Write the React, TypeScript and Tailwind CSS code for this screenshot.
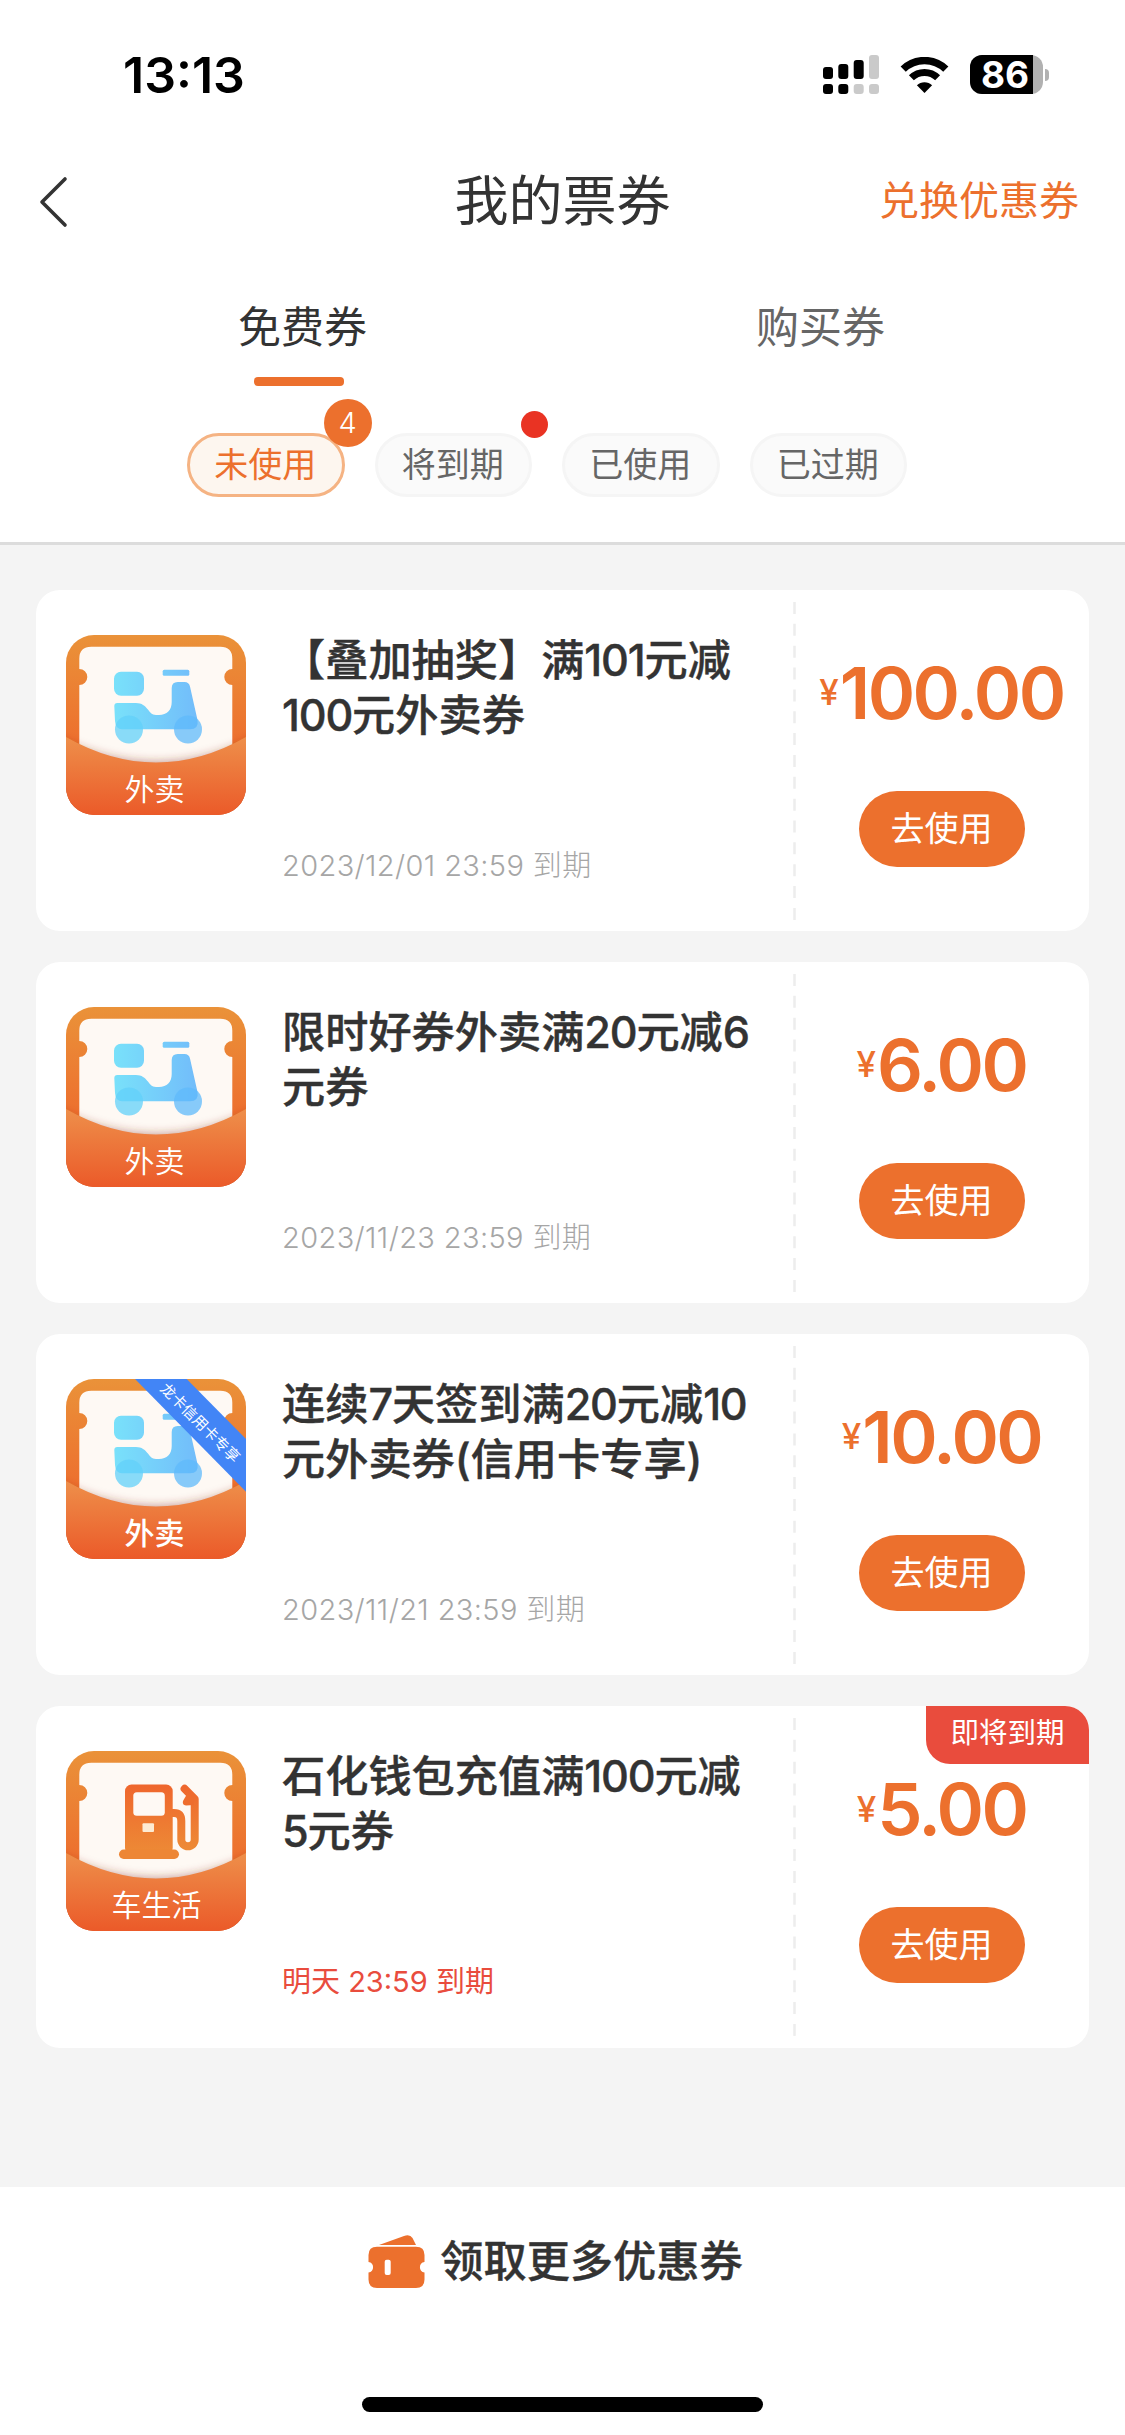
import { clsx } from 'clsx';

type IconKind = 'takeout' | 'fuel';

interface Coupon {
  id: number;
  lines: string[];
  expires: string;
  amount: string;
  icon: IconKind;
  ribbon?: string;
  tag?: string;
}

const COUPONS: Coupon[] = [
  { id: 1, lines: ['【叠加抽奖】满101元减', '100元外卖券'], expires: '2023/12/01 23:59 到期', amount: '100.00', icon: 'takeout' },
  { id: 2, lines: ['限时好券外卖满20元减6', '元券'], expires: '2023/11/23 23:59 到期', amount: '6.00', icon: 'takeout' },
  { id: 3, lines: ['连续7天签到满20元减10', '元外卖券(信用卡专享)'], expires: '2023/11/21 23:59 到期', amount: '10.00', icon: 'takeout', ribbon: '龙卡信用卡专享' },
  { id: 4, lines: ['石化钱包充值满100元减', '5元券'], expires: '明天 23:59 到期', amount: '5.00', icon: 'fuel', tag: '即将到期' },
];

const FILTERS = [
  { label: '未使用', active: true, count: 4 },
  { label: '将到期', dot: true },
  { label: '已使用' },
  { label: '已过期' },
];

function StatusBar() {
  return (
    <div className="flex h-[150px] items-start justify-between pt-[55px] pr-[76px] pl-[123px]">
      <span className="text-[50px] leading-[41px] font-semibold text-black">13:13</span>
      <div className="flex h-[39px] items-center">
        <svg width="56" height="39" viewBox="0 0 56 39">
          <rect x="0" y="12" width="10" height="12" rx="3" />
          <rect x="15.3" y="9" width="10" height="15" rx="3" />
          <rect x="30.7" y="5" width="10" height="19" rx="3" />
          <rect x="46" y="0" width="10" height="24" rx="3" fill="#cacaca" />
          <rect x="0" y="29" width="10" height="10" rx="3" />
          <rect x="15.3" y="29" width="10" height="10" rx="3" />
          <rect x="30.7" y="29" width="10" height="10" rx="3" fill="#cacaca" />
          <rect x="46" y="29" width="10" height="10" rx="3" fill="#cacaca" />
        </svg>
        <svg className="ml-[21px]" width="49" height="36" viewBox="0 0 49 36">
          <path d="M3.2 12.2 A30.5 30.5 0 0 1 45.8 12.2" fill="none" stroke="#000" strokeWidth="7.4" />
          <path d="M11.4 20.8 A18.6 18.6 0 0 1 37.6 20.8" fill="none" stroke="#000" strokeWidth="7" />
          <path d="M24.5 36 L16.9 28.3 A10.8 10.8 0 0 1 32.1 28.3 Z" />
        </svg>
        <div className="ml-[21px] h-[39px] w-[73px] rounded-[12px] bg-[#b1b1b1]">
          <div className="h-[39px] w-[63px] rounded-l-[12px] bg-black pr-[4px] text-right text-[37px] leading-[39px] font-bold text-white">86</div>
        </div>
        <div className="ml-[2px] h-[12px] w-[4px] rounded-r-full bg-[#b1b1b1]" />
      </div>
    </div>
  );
}

function Scooter() {
  return (
    <g>
      <rect x="48" y="36.7" width="30" height="24" rx="7" fill="url(#sky)" />
      <rect x="96.7" y="34.7" width="26.6" height="6" rx="1.5" fill="url(#sky)" />
      <path
        d="M48.3 71 Q48.3 68 51.3 68 H70 C82 68 82 80 90 80 H93 C101 80 105.7 75 105.7 67 V53 Q105.7 47 111.7 47 H118.5 Q123 47 124 51.5 L131.5 85 Q133 94.3 124 94.3 H56 Q49.5 94.3 49 86 Z"
        fill="url(#sky)"
      />
      <circle cx="63" cy="94.5" r="14" fill="#62d0f9" fillOpacity="0.75" />
      <circle cx="122" cy="94.5" r="14" fill="#5fbafb" fillOpacity="0.75" />
    </g>
  );
}

function FuelPump() {
  return (
    <g>
      <rect x="59" y="33.5" width="47.7" height="70" rx="6.5" fill="url(#pump)" />
      <rect x="67.3" y="41.3" width="31.5" height="23.5" rx="3.5" fill="#fef9f4" />
      <rect x="76.5" y="72.3" width="11.5" height="8.7" rx="1" fill="#fdebd3" />
      <rect x="53" y="98.5" width="60" height="9.5" rx="4.7" fill="#ed8635" />
      <path
        d="M105 62 H108 Q115.3 62 115.3 70 V88.6 A6.7 6.7 0 0 0 128.7 88.6 V48 L118.6 37.8"
        fill="none"
        stroke="url(#hose)"
        strokeWidth="8"
        strokeLinecap="round"
        strokeLinejoin="round"
      />
      <path d="M121 43 L117 50 Q116 54 120 54.5 L128 54 V46 Z" fill="#ee6d2e" />
    </g>
  );
}

function CouponIcon({ kind, ribbon }: { kind: IconKind; ribbon?: string }) {
  return (
    <svg className="shrink-0" width="180" height="180" viewBox="0 0 180 180">
      <defs>
        <linearGradient id="frame" x1="0" y1="0" x2="0" y2="1">
          <stop offset="0" stopColor="#ea9239" />
          <stop offset="0.6" stopColor="#ed6f2e" />
        </linearGradient>
        <linearGradient id="pocket" x1="0" y1="0" x2="0" y2="1">
          <stop offset="0" stopColor="#ee8f4a" />
          <stop offset="1" stopColor="#eb5a29" />
        </linearGradient>
        <linearGradient id="sky" gradientUnits="userSpaceOnUse" x1="48" y1="0" x2="132" y2="0">
          <stop offset="0" stopColor="#79e1fa" />
          <stop offset="1" stopColor="#72bcfa" />
        </linearGradient>
        <linearGradient id="pump" x1="0" y1="0" x2="0" y2="1">
          <stop offset="0" stopColor="#ef662d" />
          <stop offset="1" stopColor="#ed8b36" />
        </linearGradient>
        <linearGradient id="hose" gradientUnits="userSpaceOnUse" x1="0" y1="34" x2="0" y2="100">
          <stop offset="0" stopColor="#ef662d" />
          <stop offset="1" stopColor="#ed8b36" />
        </linearGradient>
        <filter id="soft" x="-20%" y="-20%" width="140%" height="140%">
          <feGaussianBlur stdDeviation="5" />
        </filter>
        <clipPath id="tile">
          <rect width="180" height="180" rx="28" />
        </clipPath>
      </defs>
      <g clipPath="url(#tile)">
        <rect width="180" height="180" fill="url(#frame)" />
        <path
          d="M25.3 11.7 H154.3 Q166.3 11.7 166.3 23.7 V34 A8 8 0 0 0 166.3 50 V140 H13.3 V50 A8 8 0 0 0 13.3 34 V23.7 Q13.3 11.7 25.3 11.7 Z"
          fill="#fef9f4"
        />
        {kind === 'takeout' ? <Scooter /> : <FuelPump />}
        <path d="M-10 102 Q90 152 190 102 V180 H-10 Z" fill="#8a3020" fillOpacity="0.5" filter="url(#soft)" />
        <path d="M0 102 Q90 153 180 102 V180 H0 Z" fill="url(#pocket)" />
        {ribbon && <path d="M69 0 H120.7 L180 60 V112.7 Z" fill="#4285f6" />}
      </g>
      {ribbon && (
        <text x="0" y="0" transform="translate(134 44) rotate(45)" textAnchor="middle" dy="5" fontSize="15" fill="#fff">
          {ribbon}
        </text>
      )}
      <text x={kind === 'fuel' ? 90.5 : 88.5} y="165" textAnchor="middle" fontSize="30" fontWeight={ribbon ? 500 : 350} fill="#fff">
        {kind === 'fuel' ? '车生活' : '外卖'}
      </text>
    </svg>
  );
}

// digits sit a little tighter than the Chinese glyphs around them
function TitleLine({ text }: { text: string }) {
  return (
    <span className="block">
      {text.split(/(\d+)/).map((part, i) => (
        <span key={i} className={clsx(/^\d/.test(part) && 'tracking-[-1.2px]')}>{part}</span>
      ))}
    </span>
  );
}

function CouponCard({ coupon }: { coupon: Coupon }) {
  return (
    <div className="relative flex h-[341.5px] rounded-[24px] bg-white">
      <div className="flex w-[757px] gap-[36px] pl-[30px]">
        <div className="pt-[45px]">
          <CouponIcon kind={coupon.icon} ribbon={coupon.ribbon} />
        </div>
        <div className="pt-[43px]">
          <h2 className="text-[43.2px] leading-[55px] font-medium whitespace-nowrap text-[#333] [-webkit-text-stroke:0.4px_#333]">
            {coupon.lines.map(line => (
              <TitleLine key={line} text={line} />
            ))}
          </h2>
          <p
            className={clsx(
              'mt-[101px] text-[29px] leading-[44px] whitespace-nowrap',
              coupon.tag ? 'text-[#e94c3d]' : 'font-light tracking-[0.38px] text-[#a6a6a6]',
            )}
          >
            {coupon.expires}
          </p>
        </div>
      </div>
      <svg className="mt-[12px] shrink-0" width="3" height="319" viewBox="0 0 3 319">
        <path d="M1.5 0 V319" stroke="#ededed" strokeWidth="2.5" strokeDasharray="12 9.85" />
      </svg>
      <div className="flex flex-1 flex-col items-center pr-[2px]">
        <div className="mt-[63px] flex h-[80px] items-center text-[#ec702d]">
          <span className="pr-[1px] text-[35px] leading-none font-medium">¥</span>
          <span className="text-[72px] leading-[80px] font-semibold tracking-[-2.6px]">{coupon.amount}</span>
        </div>
        <button className="mt-[58px] h-[76px] w-[166px] rounded-full bg-[#ec702d] text-[34px] leading-[76px] text-white">去使用</button>
      </div>
      {coupon.tag && (
        <span className="absolute top-0 right-0 h-[58px] w-[163px] rounded-tr-[24px] rounded-bl-[24px] bg-[#e94c3d] text-center text-[28.5px] leading-[54px] text-white">
          {coupon.tag}
        </span>
      )}
    </div>
  );
}

export default function App() {
  return (
    <div className="flex h-[2435px] w-[1125px] flex-col bg-[#f4f4f4] font-['Inter','Noto_Sans_CJK_SC',sans-serif]">
      <header className="h-[545px] border-b-[3px] border-[#dcdcdc] bg-white">
        <StatusBar />
        <div className="grid h-[104px] grid-cols-[1fr_auto_1fr] items-center pr-[46px] pl-[38px]">
          <svg width="30" height="52" viewBox="0 0 30 52">
            <path d="M27 3 L4 26 L27 49" fill="none" stroke="#333" strokeWidth="3.6" strokeLinecap="round" strokeLinejoin="round" />
          </svg>
          <h1 className="pl-[8px] text-[54px] leading-none text-[#333]">我的票券</h1>
          <span className="pb-[3px] text-right text-[40px] leading-none text-[#ec702d]">兑换优惠券</span>
        </div>
        <nav className="flex h-[134px] pl-[45px]">
          <div className="flex w-[515px] flex-col items-center pt-[42px]">
            <span className="text-[43px] leading-[62px] text-[#333]">免费券</span>
            <span className="mt-[19px] mr-[7px] h-[9px] w-[90px] rounded-[4px] bg-[#ec702d]" />
          </div>
          <div className="flex w-[521px] flex-col items-center pt-[42px]">
            <span className="text-[43px] leading-[62px] text-[#666]">购买券</span>
          </div>
        </nav>
        <div className="flex gap-[30px] pt-[45px] pl-[187px]">
          {FILTERS.map(f => (
            <div
              key={f.label}
              className={clsx(
                'relative h-[64px] w-[157.5px] rounded-full border-[3px] pr-[1px] text-center text-[34px] leading-[58px]',
                f.active ? 'border-[#f5b383] bg-[#fdf6ef] text-[#ec702d]' : 'border-[#f5f5f5] bg-[#fafafa] text-[#666]',
              )}
            >
              {f.label}
              {f.count && (
                <span className="absolute -top-[37px] -right-[30px] size-[48px] rounded-full bg-[#ec702d] text-[29px] leading-[48px] font-light text-white">{f.count}</span>
              )}
              {f.dot && <span className="absolute -top-[25px] -right-[19px] size-[27px] rounded-full bg-[#e93323]" />}
            </div>
          ))}
        </div>
      </header>

      <main className="flex flex-1 flex-col gap-[30.7px] px-[36px] pt-[44.5px]">
        {COUPONS.map(c => (
          <CouponCard key={c.id} coupon={c} />
        ))}
      </main>

      <footer className="flex h-[248px] flex-col items-center bg-white">
        <div className="mt-[43px] mr-[14px] flex h-[62px] items-center gap-[15px]">
          <svg width="57" height="53" viewBox="0 0 57 53">
            <path d="M11 10 L36 1 Q42 -1 44.5 3 L48 10 Z" fill="#ec702d" />
            <path d="M9 11.7 H48 Q56.5 11.7 56.5 20 V27 A5.3 5.3 0 0 0 56.5 37.5 V44.5 Q56.5 53 48 53 H9 Q0.5 53 0.5 44.5 V37.5 A5.3 5.3 0 0 0 0.5 27 V20 Q0.5 11.7 9 11.7 Z" fill="#ec702d" />
            <rect x="16.7" y="24.7" width="6" height="15.3" rx="2" fill="#fff" />
          </svg>
          <span className="text-[43.2px] leading-[62px] font-medium text-[#333] [-webkit-text-stroke:0.4px_#333]">领取更多优惠券</span>
        </div>
        <div className="mt-[105px] h-[15px] w-[401px] rounded-full bg-black" />
      </footer>
    </div>
  );
}
